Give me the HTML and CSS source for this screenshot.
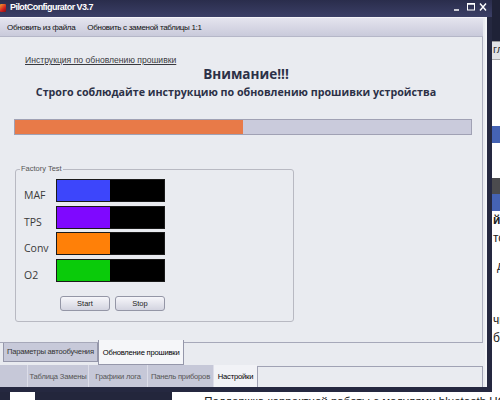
FILE: index.html
```html
<!DOCTYPE html>
<html lang="ru">
<head>
<meta charset="utf-8">
<title>PilotConfigurator V3.7</title>
<link rel="stylesheet" href="styles.css">
</head>
<body>

<div class="screen">
  <div class="desk">
    <div class="window">
      <div class="titlebar">
        <span class="app_icon"></span>
        <span class="title">PilotConfigurator V3.7</span>
        <svg class="win_btns" width="36" height="17" viewBox="0 0 36 17">
          <line x1="2" y1="10" x2="7" y2="10" stroke="#fff" stroke-width="1.5"/>
          <rect x="15.5" y="3.5" width="7" height="6.5" fill="none" stroke="#fff" stroke-width="1"/>
          <line x1="15.5" y1="4" x2="22.5" y2="4" stroke="#fff" stroke-width="1.5"/>
          <path d="M28 3.5 L34 10.5 M34 3.5 L28 10.5" stroke="#fff" stroke-width="1.4"/>
        </svg>
      </div>

      <div class="client">
        <div class="menubar">
          <span>Обновить из файла</span>
          <span>Обновить с заменой таблицы 1:1</span>
        </div>

        <div class="page">
          <a class="manual" href="#">Инструкция по обновлению прошивки</a>
          <h1>Внимание!!!</h1>
          <h2>Строго соблюдайте инструкцию по обновлению прошивки устройства</h2>

          <div class="progress"><div class="progress_fill" style="width: 228px;"></div></div>

          <fieldset class="factory">
            <legend>Factory Test</legend>
            <div class="meter">
              <span class="meter_name">MAF</span>
              <div class="bar"><div class="fill maf"></div></div>
            </div>
            <div class="meter">
              <span class="meter_name">TPS</span>
              <div class="bar"><div class="fill tps"></div></div>
            </div>
            <div class="meter">
              <span class="meter_name">Conv</span>
              <div class="bar"><div class="fill conv"></div></div>
            </div>
            <div class="meter">
              <span class="meter_name">O2</span>
              <div class="bar"><div class="fill o2"></div></div>
            </div>
            <div class="buttons">
              <button>Start</button>
              <button>Stop</button>
            </div>
          </fieldset>
        </div>

        <div class="tabs_top">
          <span class="tab">Параметры автообучения</span>
          <span class="tab active">Обновление прошивки</span>
        </div>

        <div class="tabs_bottom">
          <span class="tabs_gap"></span>
          <span class="btab w61">Таблица Замены</span>
          <span class="btab w59">Графики лога</span>
          <span class="btab w66">Панель приборов</span>
          <span class="btab w44 active">Настройки</span>
          <span class="btab_page"></span>
        </div>
      </div>
    </div>

    <div class="side">
      <div class="side_dark"></div>
      <div class="side_head">гл</div>
      <div class="side_white"></div>
      <div class="side_blue"></div>
      <div class="side_white2"></div>
      <div class="side_gray"></div>
      <div class="side_blue"></div>
      <div class="side_text">
        <span class="bold">й.</span>
        <span>то</span>
        <span class="ind">д</span>
        <span class="far">чи</span>
        <span>бо</span>
      </div>
    </div>
  </div>

  <div class="bottom">
    <span class="b_dark"></span>
    <span class="b_white"></span>
    <span class="b_dark wide"></span>
    <span class="b_text">• Поддержка корректной работы с модулями bluetooth HC-06</span>
  </div>
</div>

</body>
</html>
```

FILE: styles.css
```css
*,*:after,*:before{
	box-sizing: border-box;
}
body{
	margin: 0;
	width: 500px;
	height: 400px;
	overflow: hidden;
	background: #fff;
	font-family: "Liberation Sans", Arial, sans-serif;
	color: #222;
}
.screen{
	display: flex;
	flex-direction: column;
	width: 500px;
	height: 400px;
}
.desk{
	display: flex;
	height: 392px;
}

/* window frame */
.window{
	width: 492px;
	height: 392px;
	display: flex;
	flex-direction: column;
	background: #252840;
}
.titlebar{
	height: 17px;
	display: flex;
	align-items: center;
	background: linear-gradient(#2a2d4c, #3b3f66);
	color: #fff;
}
.app_icon{
	width: 6px;
	height: 8px;
	margin: 0 4px 1px 0;
	border-radius: 1px;
	background: linear-gradient(135deg, #f0a030, #d02020 60%, #801010);
}
.title{
	font-weight: bold;
	font-size: 9px;
	letter-spacing: -0.55px;
	line-height: 15px;
	margin-bottom: 2px;
}
.win_btns{
	margin-left: auto;
	margin-right: 4px;
}
.client{
	flex: 1;
	display: flex;
	flex-direction: column;
	margin: 0 5px 5px 0;
	padding-right: 2px;
	background: #e9ebf0;
	border-top: 1px solid #f4f4f8;
	border-right: 2px solid #f4f5f8;
}
.menubar{
	height: 19px;
	display: flex;
	align-items: center;
	gap: 12px;
	padding-left: 7px;
	background: linear-gradient(#e4e4ee, #c9cadb);
	border-bottom: 1px solid #b5b7c8;
	font-size: 8px;
	letter-spacing: -0.3px;
	color: #111;
}

/* firmware page */
.page{
	height: 306px;
	border-right: 1px solid #aeb0c0;
	border-bottom: 1px solid #a6a8b9;
}
.manual{
	display: block;
	width: fit-content;
	margin: 17px 0 0 25px;
	font-size: 8.6px;
	line-height: 12px;
	color: #3a3a40;
}
h1{
	margin: 0;
	padding-left: 10px;
	text-align: center;
	font: bold 13.5px/16px "Open Sans", sans-serif;
	color: #2c3147;
}
h2{
	margin: 2px 0 0;
	padding-right: 10px;
	text-align: center;
	font: bold 10.7px/16px "Open Sans", sans-serif;
	color: #2c3147;
}
.progress{
	width: 458px;
	height: 16px;
	margin: 19px 0 0 14px;
	border: 1px solid #a0a1b4;
	background: #cacbdc;
}
.progress_fill{
	height: 100%;
	background: #e87a48;
}
.factory{
	width: 279px;
	margin: 29px 0 0 15px;
	padding: 5px 8px 10px;
	min-width: 0;
	border: 1px solid #b8b9c2;
	border-radius: 3px;
}
.factory legend{
	margin-left: -4px;
	padding: 0 1px;
	font-size: 7.5px;
	line-height: 10px;
	color: #555;
}
.meter{
	display: flex;
	align-items: flex-start;
	height: 23px;
	margin-bottom: 3.5px;
}
.meter_name{
	width: 32px;
	margin-top: 10px;
	font: 10.5px/13px "Open Sans", sans-serif;
	color: #3a3a3a;
}
.bar{
	width: 109px;
	height: 23px;
	border: 1px solid #1a1a1a;
	background: #000;
}
.fill{
	width: 53px;
	height: 100%;
}
.maf{ background: #3d46fb; }
.tps{ background: #7f08ff; }
.conv{ background: #ff8008; }
.o2{ background: #0acb0a; }
.buttons{
	display: flex;
	gap: 5px;
	margin-top: 14px;
	padding-left: 36px;
}
.buttons button{
	width: 50px;
	height: 15px;
	padding: 0;
	border: 1px solid #9496a6;
	border-radius: 3px;
	background: linear-gradient(#f6f6fa, #d3d4e0);
	font: 7.5px "Liberation Sans", Arial, sans-serif;
	color: #222;
}

/* tab strips */
.tabs_top{
	height: 22px;
	display: flex;
	align-items: flex-start;
	padding-left: 3px;
	font-size: 7.6px;
	letter-spacing: -0.2px;
}
.tab{
	height: 19px;
	line-height: 18px;
	padding: 0 3px;
	border: 1px solid #9597aa;
	border-top: 0;
	background: #c7c9d9;
	color: #333;
}
.tab.active{
	height: 25px;
	margin-top: -3px;
	line-height: 26px;
	padding: 0 4px;
	background: #f5f6f9;
	color: #000;
}
.tabs_bottom{
	height: 22px;
	display: flex;
	font-size: 7.6px;
	letter-spacing: -0.2px;
}
.tabs_gap{
	width: 27px;
	background: #c6c8d8;
}
.btab{
	flex-shrink: 0;
	padding-top: 2px;
	line-height: 20px;
	text-align: center;
	white-space: nowrap;
	border-left: 1px solid #dcdde8;
	background: #c6c8d8;
	color: #555;
}
.w61{ width: 61px; }
.w59{ width: 59px; }
.w66{ width: 66px; }
.w44{ width: 44px; }
.btab.active{
	background: #f1f2f6;
	color: #000;
}
.btab_page{
	flex: 1;
	margin-top: 1px;
	border-top: 1px solid #a0a2b4;
	border-left: 1px solid #a0a2b4;
	border-right: 1px solid #a0a2b4;
}

/* background page behind the window */
.side{
	width: 8px;
	display: flex;
	flex-direction: column;
	font-size: 12px;
	line-height: 14px;
	white-space: nowrap;
	overflow: hidden;
}
.side_dark{ height: 41px; background: #1f2237; }
.side_head{
	height: 18px;
	padding-left: 1px;
	background: #e2e3e6;
	border-top: 1px solid #999;
	font-size: 11px;
	color: #333;
}
.side_white{ height: 67px; background: #fff; border-top: 1px solid #aaa; }
.side_blue{ height: 17px; background: #4563b4; }
.side_white2{ height: 35px; background: #fff; }
.side_gray{ height: 16px; background: #4b4b4e; }
.side_text{
	flex: 1;
	display: flex;
	flex-direction: column;
	padding: 2px 0 0 1px;
	color: #222;
}
.side_text .bold{ font-weight: bold; }
.side_text span{ margin-bottom: 4px; }
.side_text .ind{ padding-left: 4px; margin-top: 10px; }
.side_text .far{ margin-top: 36px; }

.bottom{
	height: 8px;
	display: flex;
	overflow: hidden;
}
.bottom span{ flex-shrink: 0; }
.b_dark{ width: 10px; background: #23263c; }
.b_white{ width: 25px; background: #fff; }
.b_dark.wide{ width: 137px; }
.b_text{
	padding-left: 25px;
	margin-top: 2px;
	font-size: 11.5px;
	line-height: 14px;
	white-space: nowrap;
	color: #222;
}
```
